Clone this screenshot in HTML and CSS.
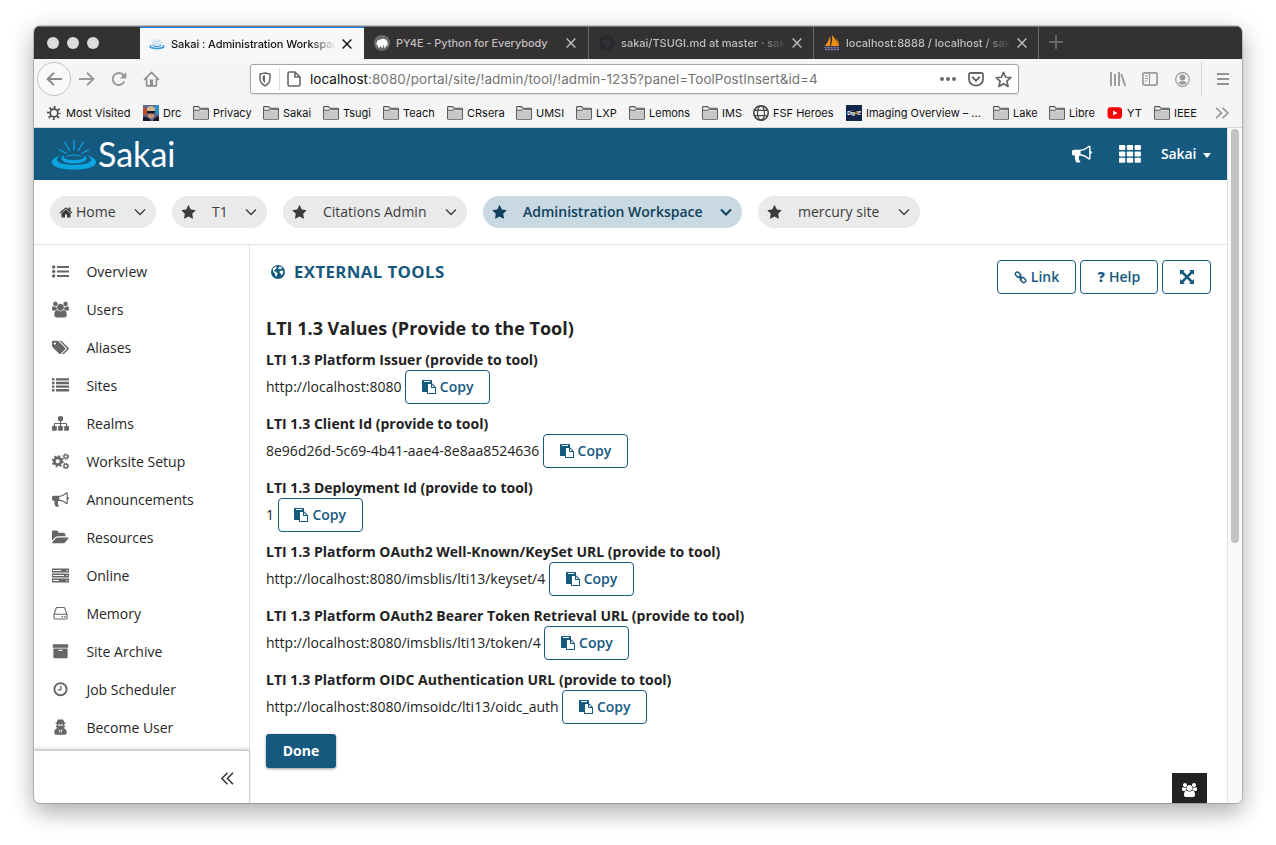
FILE: index.html
```html
<!DOCTYPE html>
<html lang="en">
<head>
<meta charset="utf-8">
<title>Sakai : Administration Workspace : External Tools</title>
<link rel="stylesheet" href="styles.css">
</head>
<body>
<svg class="defs" aria-hidden="true">
  <symbol id="star" viewBox="0 0 1792 1792"><path d="M1728 647q0 22-26 48l-363 354 86 500q1 7 1 20 0 21-10.5 35.5t-30.5 14.5q-19 0-40-12l-449-236-449 236q-22 12-40 12-21 0-31.5-14.5t-10.5-35.5q0-6 2-20l86-500-364-354q-25-27-25-48 0-37 56-46l502-73 225-455q19-41 49-41t49 41l225 455 502 73q56 9 56 46z"/></symbol>
  <symbol id="house" viewBox="0 0 1792 1792"><path d="M1472 992v480q0 26-19 45t-45 19h-384v-384h-256v384h-384q-26 0-45-19t-19-45v-480q0-1 .5-3t.5-3l575-474 575 474q1 2 1 6zm223-69l-62 74q-8 9-21 11h-3q-13 0-21-7l-692-577-692 577q-12 8-24 7-13-2-21-11l-62-74q-8-10-7-23.5t11-21.5l719-599q32-26 76-26t76 26l244 204v-195q0-14 9-23t23-9h192q14 0 23 9t9 23v408l219 182q10 8 11 21.5t-7 23.5z"/></symbol>
  <symbol id="horn" viewBox="0 0 1792 1792"><path d="M1664 640q53 0 90.5 37.5t37.5 90.5-37.5 90.5-90.5 37.5v384q0 52-38 90t-90 38q-417-347-812-380-58 19-91 66t-31 100.5 40 92.5q-20 33-23 65.5t6 58 33.5 55 48 50 61.5 50.5q-29 58-111.5 83t-168.5 11.5-132-55.5q-7-23-29.5-87.5t-32-94.5-23-89-15-101 3.5-98.5 22-110.5h-122q-66 0-113-47t-47-113v-192q0-66 47-113t113-47h480q435 0 896-384 52 0 90 38t38 90v384zm-128 604v-954q-394 302-768 343v270q377 42 768 341z"/></symbol>
  <symbol id="users" viewBox="0 0 1920 1792"><path d="M593 896q-162 5-265 128h-134q-82 0-138-40.5t-56-118.5q0-353 124-353 6 0 43.5 21t97.5 42.5 119 21.5q67 0 133-23-5 37-5 66 0 139 81 256zm1071 637q0 120-73 189.5t-194 69.5h-874q-121 0-194-69.5t-73-189.5q0-53 3.5-103.5t14-109 26.5-108.5 43-97.5 62-81 85.5-53.5 111.5-20q10 0 43 21.5t73 48 107 48 135 21.5 135-21.5 107-48 73-48 43-21.5q61 0 111.5 20t85.5 53.5 62 81 43 97.5 26.5 108.5 14 109 3.5 103.5zm-1024-1277q0 106-75 181t-181 75-181-75-75-181 75-181 181-75 181 75 75 181zm704 384q0 159-112.5 271.5t-271.5 112.5-271.5-112.5-112.5-271.5 112.5-271.5 271.5-112.5 271.5 112.5 112.5 271.5zm576 225q0 78-56 118.5t-138 40.5h-134q-103-123-265-128 81-117 81-256 0-29-5-66 66 23 133 23 59 0 119-21.5t97.5-42.5 43.5-21q124 0 124 353zm-128-609q0 106-75 181t-181 75-181-75-75-181 75-181 181-75 181 75 75 181z"/></symbol>
  <symbol id="tags" viewBox="0 0 1920 1792"><path d="M448 448q0-53-37.5-90.5t-90.5-37.5-90.5 37.5-37.5 90.5 37.5 90.5 90.5 37.5 90.5-37.5 37.5-90.5zm1067 576q0 53-37 90l-491 492q-39 37-91 37-53 0-90-37l-715-716q-38-37-64.5-101t-26.5-117v-416q0-52 38-90t90-38h416q53 0 117 26.5t102 64.5l715 714q37 39 37 91zm384 0q0 53-37 90l-491 492q-39 37-91 37-36 0-59-14t-53-45l470-470q37-37 37-90 0-52-37-91l-715-714q-38-38-102-64.5t-117-26.5h224q53 0 117 26.5t102 64.5l715 714q37 39 37 91z"/></symbol>
  <symbol id="sitemap" viewBox="0 0 1792 1792"><path d="M1792 1248v320q0 40-28 68t-68 28h-320q-40 0-68-28t-28-68v-320q0-40 28-68t68-28h96v-192h-512v192h96q40 0 68 28t28 68v320q0 40-28 68t-68 28h-320q-40 0-68-28t-28-68v-320q0-40 28-68t68-28h96v-192h-512v192h96q40 0 68 28t28 68v320q0 40-28 68t-68 28h-320q-40 0-68-28t-28-68v-320q0-40 28-68t68-28h96v-192q0-52 38-90t90-38h512v-192h-96q-40 0-68-28t-28-68v-320q0-40 28-68t68-28h320q40 0 68 28t28 68v320q0 40-28 68t-68 28h-96v192h512q52 0 90 38t38 90v192h96q40 0 68 28t28 68z"/></symbol>
  <symbol id="folder-open" viewBox="0 0 1856 1792"><path d="M1815 952q0 31-31 66l-336 396q-43 51-120.5 86.5t-143.5 35.5h-1088q-34 0-60.5-13t-26.5-43q0-31 31-66l336-396q43-51 120.5-86.5t143.5-35.5h1088q34 0 60.5 13t26.5 43zm-343-344v160h-832q-94 0-197 47.5t-164 119.5l-337 396-5 6q0-4-.5-12.5t-.5-12.5v-960q0-92 66-158t158-66h320q92 0 158 66t66 158v32h544q92 0 158 66t66 158z"/></symbol>
  <symbol id="paste" viewBox="0 0 1792 1792"><path d="M768 1664h896v-640h-416q-40 0-68-28t-28-68v-416h-384v1152zm256-1440v-64q0-13-9.5-22.5t-22.5-9.5h-704q-13 0-22.5 9.5t-9.5 22.5v64q0 13 9.5 22.5t22.5 9.5h704q13 0 22.5-9.5t9.5-22.5zm256 672h299l-299-299v299zm512 128v672q0 40-28 68t-68 28h-960q-40 0-68-28t-28-68v-160h-544q-40 0-68-28t-28-68v-1344q0-40 28-68t68-28h1088q40 0 68 28t28 68v328q21 13 36 28l408 408q28 28 48 76t20 88z"/></symbol>
  <symbol id="list-ul" viewBox="0 0 17 17"><path d="M5 2.900h12v2.200H5zM5 7.400h12v2.200H5zM5 11.900h12v2.200H5z"/><circle cx="1.700" cy="4" r="1.700"/><circle cx="1.700" cy="8.500" r="1.700"/><circle cx="1.700" cy="13" r="1.700"/></symbol>
  <symbol id="list" viewBox="0 0 17 17"><path d="M0 1.200h2.500v2.400H0zM4 1.200h13v2.400H4zM0 4.800h2.500v2.400H0zM4 4.800h13v2.400H4zM0 8.400h2.500v2.400H0zM4 8.400h13v2.400H4zM0 12h2.500v2.400H0zM4 12h13v2.400H4z"/></symbol>
  <symbol id="gears" viewBox="0 0 17 17"><g fill="none" stroke="currentColor"><circle cx="5.700" cy="8.300" r="3.400" stroke-width="2.600"/><circle cx="5.700" cy="8.300" r="5" stroke-width="2" stroke-dasharray="1.960 1.960"/><circle cx="13.800" cy="3.600" r="1.800" stroke-width="1.300"/><circle cx="13.800" cy="3.600" r="2.700" stroke-width="1.200" stroke-dasharray="1.060 1.060"/><circle cx="13.800" cy="13" r="1.800" stroke-width="1.300"/><circle cx="13.800" cy="13" r="2.700" stroke-width="1.200" stroke-dasharray="1.060 1.060"/></g></symbol>
  <symbol id="server" viewBox="0 0 17 17"><path fill-rule="evenodd" d="M0 1.500h17v4H0zM1 3v1h8V3zM0 6.500h17v4H0zM1 8v1h11V8zM0 11.500h17v4H0zM1 13v1h6v-1z"/><g fill="#fff"><circle cx="15" cy="3.500" r=".7"/><circle cx="15" cy="8.500" r=".7"/><circle cx="15" cy="13.500" r=".7"/></g></symbol>
  <symbol id="drive" viewBox="0 0 17 17"><path d="M2 9.500 4.200 3.100q.2-.6.900-.6h6.800q.7 0 .9.600L15 9.500v3.600q0 .9-.9.900H2.900q-.9 0-.9-.9zM2.200 9.300h12.600" fill="none" stroke="currentColor" stroke-width="1.100"/><path d="M9.700 11h1.400v1.400H9.700zM12.200 11h1.400v1.400h-1.400z"/></symbol>
  <symbol id="archive" viewBox="0 0 17 17"><path fill-rule="evenodd" d="M.8 1.200h15.400v3.600H.8zM1.400 5.500h14.200v9q0 .7-.7.7H2.100q-.7 0-.7-.7zM6.600 6.700v1.300h3.800V6.700z"/></symbol>
  <symbol id="clock" viewBox="0 0 17 17"><circle cx="8.500" cy="8.200" r="6.100" fill="none" stroke="currentColor" stroke-width="1.900"/><path d="M8.900 4.700v4.200H5.800" fill="none" stroke="currentColor" stroke-width="1.300"/></symbol>
  <symbol id="secret" viewBox="0 0 17 17"><path fill-rule="evenodd" d="M4.800 3.300Q5.400.2 6.700.2q.8 0 1.800.6 1-.6 1.800-.6 1.300 0 1.900 3.100l2 .8-2 .9v1.600l1 .1q-.4 1.600-1.700 2.400 3.300 1 3.300 4.500 0 2.200-2.200 2.200H4.400q-2.200 0-2.200-2.200 0-3.500 3.300-4.500Q4.200 8.300 3.800 6.700l1-.1V5L2.800 4.100zM6 5.400v1.400h2.200v-.7h.6v.7H11V5.400zM6.500 10l1.300 4.500.4-3zM10.500 10l-1.700 1.500.4 3z"/></symbol>
  <symbol id="globe" viewBox="0 0 16 16"><circle cx="8" cy="8" r="7"/><path fill="#fff" d="m2.600 5 2-2 1.500-.6 1 .9-1.300.9.400.9-1.700.6-.6 1.300 1.500.6 1.200 1.200 1.300.5-.9 1.800-1 1.600-.8-1-.2-2.100-1.500-1.300zM9 2.400l2.400.6 1.300 1.600-1.600-.3-.8 1-1.200-.5-.8.500-.2-1.200 1-.9zM9.600 7.200l1.600-.8 2 .5.200 1.300-1.200 2.300-.8.900-.7-2-1-.7z"/></symbol>
  <symbol id="link" viewBox="0 0 16 16"><g fill="none" stroke="currentColor" stroke-width="1.800"><rect x="1.300" y="2.100" width="7.200" height="4.800" rx="2.300" transform="rotate(45 4.900 4.500)"/><rect x="7.500" y="8.600" width="7.200" height="4.800" rx="2.300" transform="rotate(45 11.100 11)"/><path d="m6 6 4 4"/></g></symbol>
  <symbol id="expand" viewBox="0 0 14 14"><path d="M0 0h5L3.400 1.600 7 5.200l3.600-3.600L9 0h5v5l-1.600-1.600L8.800 7l3.600 3.600L14 9v5H9l1.600-1.600L7 8.800l-3.600 3.600L5 14H0V9l1.600 1.600L5.200 7 1.600 3.400 0 5z"/></symbol>
  <symbol id="chev" viewBox="0 0 12 8"><path d="m1 1.500 5 5 5-5" fill="none" stroke="currentColor"/></symbol>
  <symbol id="close" viewBox="0 0 10 10"><path d="m.6.6 8.800 8.800m0-8.800L.6 9.400" fill="none" stroke="currentColor" stroke-width="1.400"/></symbol>
  <symbol id="folder" viewBox="0 0 16 14"><path d="M.6 12.400V1.300q0-.7.7-.7h4.200l1.300 1.600h8q.6 0 .6.600v9.600q0 .8-.8.800H1.400q-.8 0-.8-.8z" fill="#f6f6f6" stroke="#555" stroke-width="1.100"/><path d="M1 4.500h14v8H1z" fill="#c7c7c7"/><path d="M1 4.200h5l1.500-.8H15" fill="none" stroke="#555"/></symbol>
  <symbol id="drop" viewBox="0 0 46 31"><path fill-rule="evenodd" d="M11 16.300C-4 19.500-4 30.500 23 30.500S50 19.500 35 16.300C45 20.500 40 26 23 26S1 20.500 11 16.300z"/><path fill-rule="evenodd" d="M13 16.300C7 19.500 12 24.500 23 24.500s16-5 10-8.200c1.500 3-2.500 4.700-10 4.700s-11.500-1.700-10-4.700z"/><g fill="none" stroke="currentColor"><path d="M15.500 17.300q7.500-3 15 0" stroke-width="1"/><path d="M23 1v10.500M13.500 3l5.500 9M32.500 3 27 12M8 10.500l7.500 4M38 10.500l-7.500 4" stroke-width="1.300"/></g></symbol>
</svg>

<div class="window">
  <div class="tabs">
    <div class="lights"><i></i><i></i><i></i></div>
    <div class="tab active"><svg class="fav blue"><use href="#drop"/></svg><span class="t t1">Sakai : Administration Workspac</span><svg class="x"><use href="#close"/></svg></div>
    <div class="tab"><svg class="fav" viewBox="0 0 16 16"><circle cx="8" cy="8" r="8" fill="#6c6a6b"/><path d="M2.500 10.500q-.5-6 4-6 1.500-1 3-.8 3.500.3 4 4.300l.3 2.500-1.300.3-.7-1V12.500h-2V10H9v2.500H7V10l-1.300 2.500H4V9.500l-.8 1z" fill="#fff"/></svg><span class="t t2">PY4E - Python for Everybody</span><svg class="x"><use href="#close"/></svg></div>
    <div class="tab"><svg class="fav" viewBox="0 0 16 16"><path d="M5.500 15v-2.500q-2 .3-2.800-1.500M5.500 15v-2q0-1 .5-1.500-3-.5-3-3.500 0-1.500.7-2.200-.3-1 .2-2 1 0 2 .8 2-.5 4.200 0 1-.8 2-.8.500 1 .2 2 .7.700.7 2.200 0 3-3 3.500.5.500.5 1.500v2" fill="none" stroke="#24292e" stroke-width="1.600"/><circle cx="8" cy="8" r="7" fill="none" stroke="#24292e" stroke-width="1.500"/></svg><span class="t t3">sakai/TSUGI.md at master · sak</span><svg class="x"><use href="#close"/></svg></div>
    <div class="tab"><svg class="fav" viewBox="0 0 16 16"><path d="M1 11Q5 6 6 1q1 5 0 10zM7 11Q9 5 8 0q5 5 5 11z" fill="#f29111"/><path d="M12 3q3 4 3 8h-2z" fill="#f29111"/><path d="M.5 12.500h15M1 14.500h14" stroke="#7d80bd" stroke-width="1.500" stroke-dasharray="2 1"/></svg><span class="t t4">localhost:8888 / localhost / sak</span><svg class="x"><use href="#close"/></svg></div>
    <svg class="plus" viewBox="0 0 14 14"><path d="M7 0v14M0 7h14" stroke="#7b797a" stroke-width="1.400"/></svg>
  </div>

  <div class="toolbar">
    <div class="navbtns">
      <span class="back"><svg viewBox="0 0 16 14"><path d="M16 7H1.500M8 .8 1.600 7 8 13.200" fill="none" stroke="#8a8a8a" stroke-width="1.900"/></svg></span>
      <svg class="fwd" viewBox="0 0 16 14"><path d="M0 7h14.500M8 .8 14.400 7 8 13.200" fill="none" stroke="#999" stroke-width="1.900"/></svg>
      <svg class="reload" viewBox="0 0 16 16"><path d="M13.200 10.500A6 6 0 1 1 12.500 4.300" fill="none" stroke="#999" stroke-width="1.900"/><path d="M15.300 1v6.500H8.800z" fill="#999"/></svg>
      <svg class="homebtn" viewBox="0 0 18 17"><path d="m1 9.500 8-8 8 8M3.800 8v7.800h10.400V8" fill="none" stroke="#8e8e8e" stroke-width="1.700" stroke-linejoin="round"/><path d="M7.300 9h3.400v7H7.300z" fill="#8e8e8e"/></svg>
    </div>
    <div class="url">
      <svg class="shield" viewBox="0 0 12 15"><path d="M6 .9 11 2v4.500q0 4.700-5 7.300-5-2.600-5-7.300V2z" fill="none" stroke="#666" stroke-width="1.500"/><path d="M6 3.300 3.600 4v3q0 2.500 2.400 4.300z" fill="#666"/></svg>
      <i class="bar"></i>
      <svg class="page" viewBox="0 0 14 16"><path d="M2.500 1H8l5 5v7.500q0 1.500-1.500 1.500h-9Q1 15 1 13.500v-11Q1 1 2.500 1zM8 1v5h5" fill="none" stroke="#666" stroke-width="1.600"/></svg>
      <span class="addr"><b>localhost</b>:8080/portal/site/!admin/tool/!admin-1235?panel=ToolPostInsert&amp;id=4</span>
      <svg class="dots" viewBox="0 0 16 4"><g fill="#666"><circle cx="2" cy="2" r="2"/><circle cx="8" cy="2" r="2"/><circle cx="14" cy="2" r="2"/></g></svg>
      <svg class="pocket" viewBox="0 0 16 15"><path d="M2.500 1h11Q15 1 15 2.500V7q0 6-7 6.700Q1 13 1 7V2.500Q1 1 2.500 1z" fill="none" stroke="#666" stroke-width="1.800"/><path d="M4.600 5.300 8 8.600l3.400-3.300" fill="none" stroke="#666" stroke-width="1.900" stroke-linecap="round"/></svg>
      <svg class="fave" viewBox="0 0 16 16"><path d="m8 1.300 2 4.600 4.900.4-3.700 3.300 1.100 5L8 12l-4.300 2.600 1.100-5L1.100 6.300 6 5.900z" fill="none" stroke="#666" stroke-width="1.600" stroke-linejoin="round"/></svg>
    </div>
    <div class="tools">
      <svg class="lib" viewBox="0 0 16 14"><path d="M1 0v14M5 2v12M9 0v14M11.200 2l4 12" fill="none" stroke="#999" stroke-width="1.900"/></svg>
      <svg class="side" viewBox="0 0 16 14"><rect x=".9" y=".9" width="14.200" height="12.200" rx="2" fill="none" stroke="#999" stroke-width="1.700"/><path d="M7.500 1v12M3 4h3M3 6.500h3M3 9h2" fill="none" stroke="#999" stroke-width="1.100"/></svg>
      <svg class="acct" viewBox="0 0 15 15"><circle cx="7.500" cy="7.500" r="6.800" fill="none" stroke="#999" stroke-width="1.200"/><circle cx="7.500" cy="5.500" r="2.900" fill="#999"/><path d="M3 10.500q4.500-3 9 0-4.500 4.500-9 0z" fill="#999"/></svg>
      <i class="sep"></i>
      <svg class="burger" viewBox="0 0 12 12"><path d="M0 1h12M0 6h12M0 11h12" stroke="#949494" stroke-width="1.800"/></svg>
    </div>
  </div>

  <div class="marks">
    <span><svg viewBox="0 0 16 16"><circle cx="8" cy="8" r="4.400" fill="none" stroke="#4a4a4a" stroke-width="2"/><circle cx="8" cy="8" r="6.500" fill="none" stroke="#4a4a4a" stroke-width="3" stroke-dasharray="2 3.105" stroke-dashoffset="1"/></svg>Most Visited</span>
    <span><svg viewBox="0 0 16 16"><path fill="#5d6690" d="M0 0h16v16H0z"/><path fill="#b94c2d" d="M0 3h4v7H0z"/><path fill="#2e8fbe" d="M12 0h4v9h-4z"/><path fill="#c9b98c" d="M4 3q4-4 8 0v3H4z"/><path fill="#c79478" d="M5 6h6v6q-3 3-6 0z"/><path fill="#171a28" d="M4 6h8v2l-3 1-1-1-1 1-3-1zM0 12q5-1 8 4H0zM16 11q-5 1-6 5h6z"/></svg>Drc</span>
    <span><svg><use href="#folder"/></svg>Privacy</span>
    <span><svg><use href="#folder"/></svg>Sakai</span>
    <span><svg><use href="#folder"/></svg>Tsugi</span>
    <span><svg><use href="#folder"/></svg>Teach</span>
    <span><svg><use href="#folder"/></svg>CRsera</span>
    <span><svg><use href="#folder"/></svg>UMSI</span>
    <span><svg><use href="#folder"/></svg>LXP</span>
    <span><svg><use href="#folder"/></svg>Lemons</span>
    <span><svg><use href="#folder"/></svg>IMS</span>
    <span><svg viewBox="0 0 16 16"><g fill="none" stroke="#444" stroke-width="1.200"><circle cx="8" cy="8" r="7.200" stroke-width="1.600"/><ellipse cx="8" cy="8" rx="3.500" ry="7"/><path d="M1.500 5.300h13M1.500 10.700h13"/></g></svg>FSF Heroes</span>
    <span><span class="dig">Dig<em>4</em>E</span>Imaging Overview – ...</span>
    <span><svg><use href="#folder"/></svg>Lake</span>
    <span><svg><use href="#folder"/></svg>Libre</span>
    <span><svg viewBox="0 0 16 14"><rect x=".5" y="1.200" width="14.500" height="11.600" rx="3" fill="#f00"/><path d="m6 4.500 4.500 2.500L6 9.500z" fill="#fff"/></svg>YT</span>
    <span><svg><use href="#folder"/></svg>IEEE</span>
    <svg class="more" viewBox="0 0 14 12"><path d="m1 .8 5.400 5.200L1 11.200M7.500.8 12.900 6l-5.400 5.200" fill="none" stroke="#999" stroke-width="1.700"/></svg>
  </div>

  <div class="viewport">
    <div class="site">
      <header class="top">
        <svg class="logo"><use href="#drop"/></svg><span class="word">Sakai</span>
        <svg class="horn"><use href="#horn"/></svg>
        <svg class="grid" viewBox="0 0 22 18"><g fill="#fff"><rect width="6.300" height="5" rx="1"/><rect x="7.800" width="6.300" height="5" rx="1"/><rect x="15.600" width="6.300" height="5" rx="1"/><rect y="6.400" width="6.300" height="5" rx="1"/><rect x="7.800" y="6.400" width="6.300" height="5" rx="1"/><rect x="15.600" y="6.400" width="6.300" height="5" rx="1"/><rect y="12.800" width="6.300" height="5" rx="1"/><rect x="7.800" y="12.800" width="6.300" height="5" rx="1"/><rect x="15.600" y="12.800" width="6.300" height="5" rx="1"/></g></svg>
        <span class="me">Sakai</span><i class="caret"></i>
      </header>
      <nav class="pills">
        <span class="pill home"><svg class="s"><use href="#house"/></svg><span>Home</span><svg class="c"><use href="#chev"/></svg></span>
        <span class="pill p2"><svg class="s"><use href="#star"/></svg><span>T1</span><svg class="c"><use href="#chev"/></svg></span>
        <span class="pill p3"><svg class="s"><use href="#star"/></svg><span>Citations Admin</span><svg class="c"><use href="#chev"/></svg></span>
        <span class="pill p4 current"><svg class="s"><use href="#star"/></svg><span>Administration Workspace</span><svg class="c"><use href="#chev"/></svg></span>
        <span class="pill p5"><svg class="s"><use href="#star"/></svg><span>mercury site</span><svg class="c"><use href="#chev"/></svg></span>
      </nav>
      <div class="body">
        <aside class="menu">
          <ul>
            <li><svg><use href="#list-ul"/></svg>Overview</li>
            <li><svg><use href="#users"/></svg>Users</li>
            <li><svg><use href="#tags"/></svg>Aliases</li>
            <li><svg><use href="#list"/></svg>Sites</li>
            <li><svg><use href="#sitemap"/></svg>Realms</li>
            <li><svg><use href="#gears"/></svg>Worksite Setup</li>
            <li><svg><use href="#horn"/></svg>Announcements</li>
            <li><svg><use href="#folder-open"/></svg>Resources</li>
            <li><svg><use href="#server"/></svg>Online</li>
            <li><svg><use href="#drive"/></svg>Memory</li>
            <li><svg><use href="#archive"/></svg>Site Archive</li>
            <li><svg><use href="#clock"/></svg>Job Scheduler</li>
            <li><svg><use href="#secret"/></svg>Become User</li>
          </ul>
          <div class="collapse"><svg viewBox="0 0 13 13"><path d="M6.500.8.9 6.500l5.600 5.700M12 .8 6.400 6.500 12 12.200" fill="none" stroke="#333" stroke-width="1.500"/></svg></div>
        </aside>
        <main>
          <div class="head">
            <h1><svg><use href="#globe"/></svg>EXTERNAL TOOLS</h1>
            <div class="acts">
              <span class="btn b1"><svg><use href="#link"/></svg>Link</span>
              <span class="btn b2"><b>?</b>Help</span>
              <span class="btn b3"><svg><use href="#expand"/></svg></span>
            </div>
          </div>
          <h2>LTI 1.3 Values (Provide to the Tool)</h2>
          <div class="field"><h3>LTI 1.3 Platform Issuer (provide to tool)</h3><p>http://localhost:8080 <span class="btn copy"><svg><use href="#paste"/></svg>Copy</span></p></div>
          <div class="field"><h3>LTI 1.3 Client Id (provide to tool)</h3><p>8e96d26d-5c69-4b41-aae4-8e8aa8524636 <span class="btn copy"><svg><use href="#paste"/></svg>Copy</span></p></div>
          <div class="field"><h3>LTI 1.3 Deployment Id (provide to tool)</h3><p>1 <span class="btn copy"><svg><use href="#paste"/></svg>Copy</span></p></div>
          <div class="field"><h3>LTI 1.3 Platform OAuth2 Well-Known/KeySet URL (provide to tool)</h3><p>http://localhost:8080/imsblis/lti13/keyset/4 <span class="btn copy"><svg><use href="#paste"/></svg>Copy</span></p></div>
          <div class="field"><h3>LTI 1.3 Platform OAuth2 Bearer Token Retrieval URL (provide to tool)</h3><p>http://localhost:8080/imsblis/lti13/token/4 <span class="btn copy"><svg><use href="#paste"/></svg>Copy</span></p></div>
          <div class="field"><h3>LTI 1.3 Platform OIDC Authentication URL (provide to tool)</h3><p>http://localhost:8080/imsoidc/lti13/oidc_auth <span class="btn copy"><svg><use href="#paste"/></svg>Copy</span></p></div>
          <span class="done">Done</span>
          <div class="chat"><svg><use href="#users"/></svg></div>
        </main>
      </div>
    </div>
    <div class="scroll"><i></i></div>
  </div>
</div>
</body>
</html>
```

FILE: styles.css
```css
* { box-sizing: border-box; }
body { margin: 0; height: 845px; padding: 26px 34px 0; background: #fff; overflow: hidden; font: 14px/20px "Open Sans", sans-serif; color: #222; }
svg { display: block; flex: none; fill: currentColor; overflow: visible; }
.defs { display: none; }
.window { width: 1208px; height: 777px; border-radius: 6px; overflow: hidden; display: flex; flex-direction: column; background: #fff; box-shadow: 0 0 0 1px rgba(0,0,0,.18), 0 10px 22px rgba(0,0,0,.24), 0 4px 30px rgba(0,0,0,.12); }

.tabs { flex: none; height: 33px; display: flex; background: #333132; border-top: 1px solid #777; font: 500 11px/32px Inter, sans-serif; color: #b4b3b3; }
.lights { width: 106px; display: flex; align-items: center; gap: 8px; padding-left: 13px; }
.lights i { width: 12px; height: 12px; border-radius: 50%; background: #dcdcdc; }
.tab { width: 225px; display: flex; align-items: center; padding: 0 12px 0 10px; border-right: 1px solid #6a6869; }
.tab.active { width: 224px; padding-left: 9px; background: #f7f7f7; color: #111; border-top: 1px solid #0a84ff; border-right: 0; line-height: 30px; }
.fav { width: 16px; height: 16px; margin-right: 6px; }
.blue { color: #3a9bdc; }
.t { width: 165px; white-space: nowrap; margin-right: 6px; letter-spacing: -.06px; }
.t1 { letter-spacing: -.08px; -webkit-mask-image: linear-gradient(90deg, #000 84%, transparent); mask-image: linear-gradient(90deg, #000 84%, transparent); }
.t3, .t4 { letter-spacing: 0; -webkit-mask-image: linear-gradient(90deg, #000 82%, transparent); mask-image: linear-gradient(90deg, #000 82%, transparent); }
.x { width: 10px; height: 10px; }
.tab:not(.active) { color: #c0bfbf; }
.plus { width: 14px; height: 14px; margin: 8px 0 0 10px; }

.toolbar { flex: none; height: 42px; display: flex; align-items: center; background: #f5f5f5; font-family: Inter, sans-serif; padding-bottom: 2px; }
.navbtns { width: 216px; display: flex; align-items: center; padding-left: 3px; }
.back { width: 34px; height: 34px; border: 1px solid #c4c4c4; border-radius: 50%; display: grid; place-items: center; background: #f9f9f9; }
.back svg, .fwd { width: 16px; height: 14px; }
.fwd { margin-left: 8px; }
.reload { width: 16px; height: 16px; margin-left: 16px; }
.homebtn { width: 17px; height: 16px; margin-left: 16px; }
.url { width: 769px; height: 30px; display: flex; align-items: center; background: #fff; border: 1px solid #a5a5a5; border-radius: 3px; box-shadow: 0 1px 2px rgba(0,0,0,.1); padding-left: 8px; }
.shield { width: 12px; height: 15px; }
.bar { width: 1px; height: 22px; margin-left: 8px; background: #ddd; }
.page { width: 14px; height: 16px; margin-left: 7px; }
.addr { margin-left: 9px; width: 630px; font-size: 13.500px; letter-spacing: .04px; color: #737373; white-space: nowrap; }
.addr b { font-weight: 400; color: #0c0c0d; }
.dots { width: 16px; height: 4px; }
.pocket { width: 16px; height: 15px; margin-left: 12px; }
.fave { width: 17px; height: 17px; margin-left: 11px; }
.tools { display: flex; align-items: center; margin-left: 91px; }
.lib { width: 16px; height: 14px; }
.side { width: 16px; height: 14px; margin-left: 16px; }
.acct { width: 15px; height: 15px; margin-left: 17px; }
.sep { width: 1px; height: 34px; background: #d5d5d5; margin: 0 15px 0 11px; }
.burger { width: 12px; height: 12px; }

.marks { flex: none; height: 27px; display: grid; grid-template-columns: 96px 50px 70px 60px 60px 64px 69px 60px 53px 73px 51px 93px 147px 56px 58px 47px 61px 14px; align-items: center; padding: 0 0 3px 13px; background: #f5f5f5; border-bottom: 1px solid #d6d6d6; font: 11px/16px Inter, sans-serif; color: #111; white-space: nowrap; }
.marks > span { display: flex; align-items: center; }
.marks > span > svg { width: 16px; height: 14px; margin-right: 4px; }
.marks > span:nth-child(-n+2) > svg, .marks > span:nth-child(12) > svg { height: 16px; }
.marks > span:first-child > svg { width: 14px; margin-right: 5px; }
.dig { width: 16px; height: 16px; margin-right: 4px; background: #10264a; color: #fff; font-size: 5px; font-weight: 700; text-align: center; letter-spacing: -.2px; }
.dig em { font-style: normal; color: #e4a81d; }
.more { width: 14px; height: 12px; }

.viewport { flex: 1; display: flex; min-height: 0; }
.site { width: 1193px; display: flex; flex-direction: column; }
.scroll { width: 15px; background: #fafafa; border-left: 1px solid #e5e5e5; padding: 1px 3px; }
.scroll i { display: block; width: 8px; height: 414px; border-radius: 4px; background: #c2c2c2; }
.top { flex: none; height: 52px; display: flex; align-items: center; background: #15597f; color: #fff; padding-left: 17px; }
.logo { width: 46px; height: 31px; color: #0aa5e2; margin-top: 1px; }
.word { width: 975px; font: 34px/40px Lato, sans-serif; padding-left: 1px; }
.top .horn { width: 20px; height: 20px; }
.grid { width: 22px; height: 18px; margin-left: 27px; }
.me { margin-left: 20px; width: 36px; font-weight: 600; letter-spacing: -.1px; }
.caret { margin: 3px 0 0 6px; border: 4.500px solid transparent; border-top: 5px solid #fff; border-bottom: 0; }

.pills { flex: none; height: 65px; display: flex; gap: 16px; padding: 16px; border-bottom: 1px solid #e0e0e0; color: #3c3c3c; white-space: nowrap; }
.pill { height: 32px; border-radius: 16px; background: #eaeaea; display: flex; align-items: center; padding: 0 10px 0 9px; }
.pill .s { width: 15px; height: 15px; margin-right: 16px; }
.pill .c { width: 12px; height: 8px; margin-left: auto; stroke-width: 1.300; }
.home { width: 106px; }
.home .s { width: 14px; margin-right: 3px; }
.p2 { width: 95px; }
.p3 { width: 184px; }
.p4 { width: 259px; }
.p5 { width: 162px; }
.current { background: #c8d9e2; color: #0e405c; font-weight: 600; }
.current .c { stroke-width: 2; }

.body { flex: 1; display: flex; min-height: 0; }
.menu { width: 216px; border-right: 1px solid #e0e0e0; display: flex; flex-direction: column; }
.menu ul { list-style: none; margin: 0; padding: 8px 0 0 18px; height: 505px; }
.menu li { height: 38px; display: flex; align-items: center; gap: 17.400px; color: #262626; }
.menu li svg { width: 17px; height: 17px; margin-top: -1px; color: #666; }
.collapse { flex: 1; border-top: 1px solid #ccc; box-shadow: 0 -1px 3px rgba(0,0,0,.25); display: flex; align-items: center; justify-content: flex-end; padding: 3px 15px 0 0; }
.collapse svg { width: 13px; height: 13px; }

main { flex: 1; position: relative; padding: 15px 16px 0; }
.head { height: 34px; display: flex; justify-content: space-between; }
h1, h2, h3, p { margin: 0; }
h1 { display: flex; height: 24px; align-items: center; font-size: 16.800px; line-height: 24px; color: #15597f; font-weight: 700; padding-left: 4px; }
h1 svg { width: 16px; height: 16px; margin-right: 8px; }
.acts { display: flex; gap: 4px; }
.btn { height: 34px; border: 1px solid #15597f; border-radius: 4px; display: inline-flex; align-items: center; justify-content: center; color: #15597f; font-weight: 600; background: #fff; }
.b1 { width: 79px; }
.b1 svg { width: 13px; height: 13px; margin-right: 4px; }
.b2 { width: 78px; }
.b2 b { font-weight: 800; margin-right: 4px; }
.b3 { width: 49px; }
.b3 svg { width: 14px; height: 14px; }
h1 { letter-spacing: .4px; }
h2 { margin-top: 21px; font-size: 18px; line-height: 26px; font-weight: 700; height: 35px; }
.field { height: 64px; }
h3 { font-size: 14px; line-height: 20px; font-weight: 700; white-space: nowrap; }
.field p { display: flex; align-items: center; white-space: nowrap; gap: 3.700px; }
.copy { width: 85px; }
.copy svg { width: 14px; height: 14px; margin-right: 4px; }
.done { display: flex; width: 70px; height: 34px; align-items: center; justify-content: center; background: #15597f; color: #fff; font-weight: 700; border-radius: 3px; box-shadow: 0 1px 3px rgba(0,0,0,.4); }
.chat { position: absolute; right: 20px; bottom: 0; width: 35px; height: 30px; background: #222; color: #fff; display: grid; place-items: center; padding-top: 3px; }
.chat svg { width: 15px; height: 14px; }
```
